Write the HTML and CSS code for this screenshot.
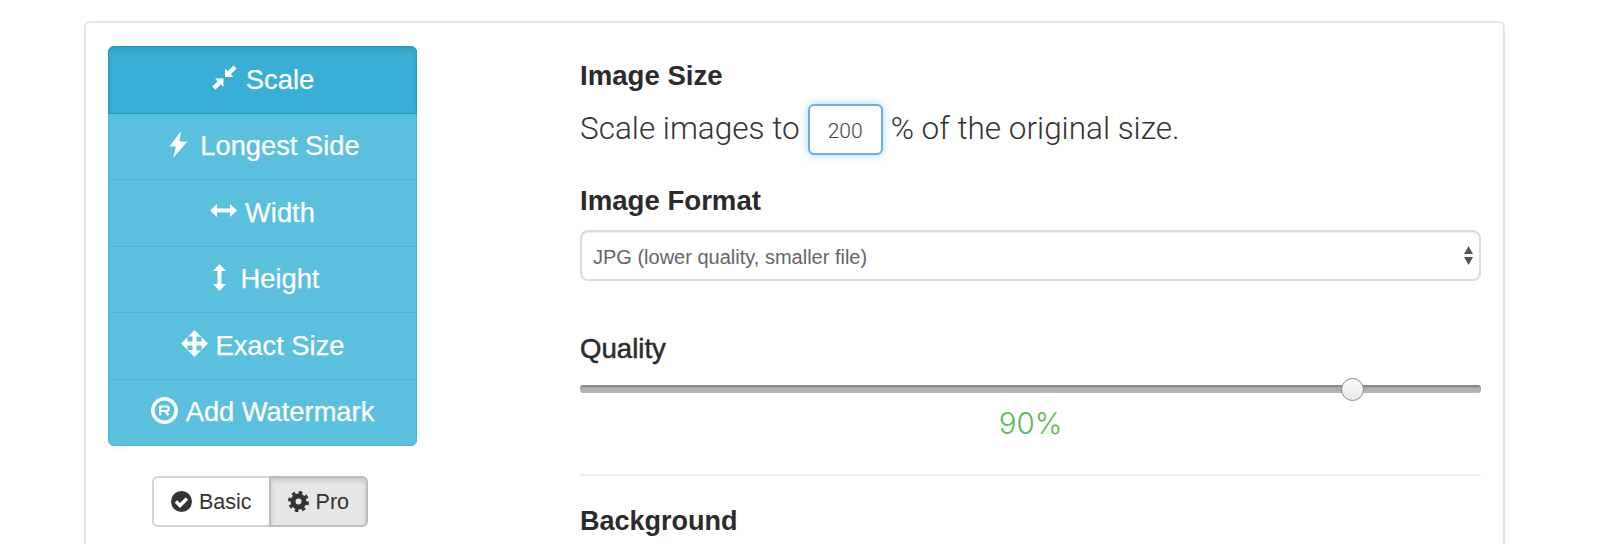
FILE: index.html
```html
<!DOCTYPE html>
<html lang="en">
<head>
<meta charset="utf-8">
<title>Image Size</title>
<link rel="stylesheet" href="styles.css">
</head>
<body>
<main class="card">
  <aside class="side">
    <nav class="modes">
      <a class="mode active">
        <svg class="ico" width="25" height="25" viewBox="0 0 25 25"><path d="M13 3.500V12h8.500zM11.500 22V13.500H3z" fill="#fff"/><path d="M16.500 8.500 23 2M8 17 1.800 23.200" stroke="#fff" stroke-width="4.500" fill="none"/></svg>
        <span>Scale</span>
      </a>
      <a class="mode">
        <svg class="ico" width="18" height="27" viewBox="0 0 18 27"><path d="M11.500 0 0 15.500h6.500L3.500 27 18 10.500h-8z" fill="#fff"/></svg>
        <span>Longest Side</span>
      </a>
      <a class="mode">
        <svg class="ico" width="27" height="13" viewBox="0 0 27 13"><path d="M0 6.500 7 0v4.500h13V0l7 6.500-7 6.500V8.500H7V13z" fill="#fff"/></svg>
        <span>Width</span>
      </a>
      <a class="mode">
        <svg class="ico" width="13" height="27" viewBox="0 0 13 27"><path d="M6.500 0 13 7H8.500v13H13l-6.500 7L0 20h4.500V7H0z" fill="#fff"/></svg>
        <span>Height</span>
      </a>
      <a class="mode">
        <svg class="ico" width="27" height="27" viewBox="0 0 27 27"><path fill-rule="evenodd" d="M13.500 0 27 13.500 13.500 27 0 13.500zM6.500 7v4.500h5V6.500H7zM15.500 6.500v5h5V7zM6.500 15.500V20h5v-4.500zM15.500 15.500v5h5v-5z" fill="#fff"/></svg>
        <span>Exact Size</span>
      </a>
      <a class="mode">
        <svg class="ico" width="27" height="27" viewBox="0 0 27 27"><circle cx="13.500" cy="13.500" r="11.700" fill="none" stroke="#fff" stroke-width="3.600"/><path d="M9.200 18.300V9.500h6.300a2.200 2.200 0 0 1 0 4.500H9.200M14 14l3.600 4.300" fill="none" stroke="#fff" stroke-width="2.200"/></svg>
        <span>Add Watermark</span>
      </a>
    </nav>
    <div class="toggle">
      <button class="tbtn" type="button">
        <svg class="ico" width="21" height="21" viewBox="0 0 21 21"><circle cx="10.500" cy="10.500" r="10.500" fill="#333"/><path d="M5 10.500l4 4 7-7" fill="none" stroke="#fff" stroke-width="3.500"/></svg>
        <span>Basic</span>
      </button>
      <button class="tbtn on" type="button">
        <svg class="ico" width="21" height="21" viewBox="0 0 21 21"><circle cx="10.500" cy="10.500" r="5.500" fill="none" stroke="#333" stroke-width="5"/><circle cx="10.500" cy="10.500" r="9" fill="none" stroke="#333" stroke-width="3" stroke-dasharray="3.570 3.500"/></svg>
        <span>Pro</span>
      </button>
    </div>
  </aside>
  <section class="form">
    <h2 class="h h-size">Image Size</h2>
    <div class="scale">
      <span class="lead">Scale images to</span>
      <input class="pct" type="text" value="200">
      <span class="lead">% of the original size.</span>
    </div>
    <h2 class="h h-format">Image Format</h2>
    <div class="selwrap">
      <select class="sel"><option>JPG (lower quality, smaller file)</option></select>
      <svg class="arrows" width="9" height="19" viewBox="0 0 9 19"><path d="M4.500 0 9 8H0zM0 11h9l-4.500 8z" fill="#555"/></svg>
    </div>
    <h2 class="h h-quality">Quality</h2>
    <input class="range" type="range" min="25" max="100" value="90">
    <div class="qval">90%</div>
    <hr class="rule">
    <h2 class="h h-bg">Background</h2>
  </section>
</main>
</body>
</html>
```

FILE: styles.css
```css
html, body {
  margin: 0;
  height: 544px;
  overflow: hidden;
  background: #fff;
}
body {
  font-family: "Liberation Sans", Arial, sans-serif;
  color: #333;
  padding: 21px 95px 0 84px;
  box-sizing: border-box;
}
.card {
  display: flex;
  gap: 163px;
  height: 700px;
  box-sizing: border-box;
  padding: 23px 22px;
  border: 2px solid #e6e6e6;
  border-radius: 6px;
}
.side {
  flex: 0 0 309px;
  display: flex;
  flex-direction: column;
}
.modes {
  width: 100%;
  height: 400px;
  display: flex;
  flex-direction: column;
  border-radius: 6px;
  overflow: hidden;
}
.mode {
  flex: 1;
  display: flex;
  align-items: center;
  justify-content: center;
  gap: 8px;
  box-sizing: border-box;
  font-size: 27.300px;
  color: #fff;
  background: #5bc0de;
  border: 1px solid #46b8da;
  border-top: 0;
  -webkit-text-stroke: .25px #fff;
}
.mode.active {
  background: #39afd5;
  border: 1px solid #269abc;
  box-shadow: inset 0 3px 5px rgba(0, 0, 0, .125);
}
.ico {
  flex: none;
  margin-top: -4px;
}
.mode .ico {
  width: 27px;
}
.toggle {
  display: flex;
  align-self: flex-start;
  margin: 30px 0 0 44px;
  height: 51px;
}
.tbtn {
  display: flex;
  align-items: center;
  gap: 7px;
  padding: 1px 17px 0;
  font: 21.500px "Liberation Sans", Arial, sans-serif;
  color: #333;
  background: #fff;
  border: 2px solid #d4d4d4;
  border-radius: 6px 0 0 6px;
}
.tbtn .ico {
  margin-top: -2px;
}
.tbtn.on {
  margin-left: -2px;
  padding: 1px 17px 0;
  background: #e6e6e6;
  border-color: #bcbcbc;
  border-radius: 0 6px 6px 0;
  box-shadow: inset 0 3px 5px rgba(0, 0, 0, .125);
}
.form {
  flex: 1;
  min-width: 0;
}
.h {
  margin: 0;
  font-size: 27.600px;
  line-height: 30px;
  font-weight: bold;
  color: #2b2b2b;
}
.h-size { margin-top: 15px; }
.h-format { margin-top: 31px; }
.h-quality {
  margin-top: 53px;
  font-weight: normal;
  -webkit-text-stroke: .5px #2b2b2b;
}
.h-bg {
  margin-top: 30px;
  font-size: 27px;
}
.scale {
  display: flex;
  align-items: center;
  gap: 8px;
  margin-top: 13px;
  height: 51px;
  font-family: Roboto, "Liberation Sans", sans-serif;
  font-weight: 300;
  font-size: 31.500px;
  color: #333;
}
.lead {
  margin-top: -2px;
}
.pct {
  width: 75px;
  height: 51px;
  box-sizing: border-box;
  padding: 3px 0 0;
  text-align: center;
  font: 300 21px Roboto, "Liberation Sans", sans-serif;
  color: #444;
  background: #fff;
  border: 2px solid #66afe9;
  border-radius: 6px;
  outline: 0;
  box-shadow: 0 0 8px rgba(102, 175, 233, .5);
}
.selwrap {
  position: relative;
  margin-top: 14px;
  height: 51px;
}
.sel {
  appearance: none;
  -webkit-appearance: none;
  display: block;
  width: 100%;
  height: 51px;
  padding: 2px 40px 0 11px;
  font: 20px "Liberation Sans", Arial, sans-serif;
  color: #666;
  background: #fff;
  border: 2px solid #dcdcdc;
  border-radius: 8px;
  box-shadow: inset 0 1px 1px rgba(0, 0, 0, .075);
}
.arrows {
  position: absolute;
  right: 8px;
  top: 16px;
}
.range {
  appearance: none;
  -webkit-appearance: none;
  display: block;
  width: 100%;
  height: 22px;
  margin: 14px 0 0;
  background: transparent;
}
.range::-webkit-slider-runnable-track {
  height: 8px;
  border-radius: 3px;
  background: linear-gradient(#8a8a8a 0, #8a8a8a 18%, #ababab 35%, #bababa 100%);
}
.range::-webkit-slider-thumb {
  -webkit-appearance: none;
  width: 23px;
  height: 23px;
  margin-top: -7.500px;
  box-sizing: border-box;
  border-radius: 50%;
  border: 1.500px solid #8a8a8a;
  background: linear-gradient(#fafafa, #e8e8e8);
}
.qval {
  margin-top: 5px;
  line-height: 36px;
  text-align: center;
  font-family: Inter, "Liberation Sans", sans-serif;
  font-weight: 300;
  font-size: 29.500px;
  color: #5cb85c;
}
.rule {
  margin: 33px 0 0;
  border: 0;
  border-top: 2px solid #eee;
}
```
